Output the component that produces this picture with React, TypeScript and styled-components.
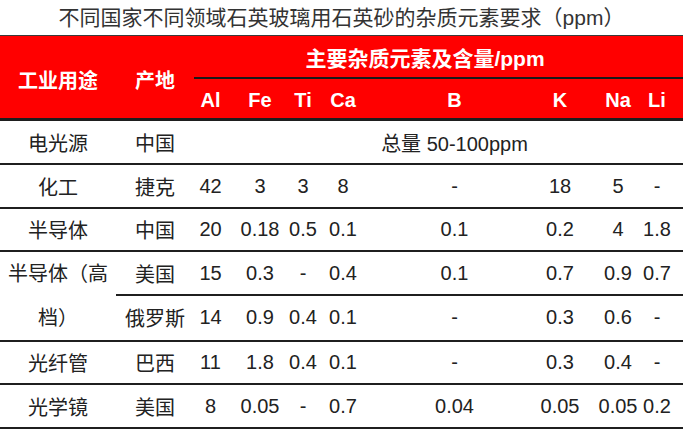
import React from "react";
import styled, { createGlobalStyle } from "styled-components";

const GlobalStyle = createGlobalStyle`
  html, body {
    margin: 0;
    padding: 0;
    background: #fff;
  }
  body {
    font-family: "Liberation Sans", "Noto Sans CJK SC", sans-serif;
  }
  * {
    box-sizing: border-box;
  }
`;

// widths of Al, Fe, Ti, Ca, B, K, Na, Li and the empty tail
const ELEMENT_COLS = "33px 66px 20px 60px 163px 48px 68px 10px 1fr";
const ELEMENTS = ["Al", "Fe", "Ti", "Ca", "B", "K", "Na", "Li"];

interface Sample {
    use: string;
    origin: string;
    values?: string[];
    total?: string;
    height: number;
}

const topRows: Sample[] = [
    { use: "电光源", origin: "中国", total: "总量 50-100ppm", height: 44 },
    { use: "化工", origin: "捷克", values: ["42", "3", "3", "8", "-", "18", "5", "-"], height: 44 },
    { use: "半导体", origin: "中国", values: ["20", "0.18", "0.5", "0.1", "0.1", "0.2", "4", "1.8"], height: 43 },
];

const highEnd = {
    use: "半导体（高档）",
    rows: [
        { origin: "美国", values: ["15", "0.3", "-", "0.4", "0.1", "0.7", "0.9", "0.7"] },
        { origin: "俄罗斯", values: ["14", "0.9", "0.4", "0.1", "-", "0.3", "0.6", "-"] },
    ],
};

const bottomRows: Sample[] = [
    { use: "光纤管", origin: "巴西", values: ["11", "1.8", "0.4", "0.1", "-", "0.3", "0.4", "-"], height: 43 },
    { use: "光学镜", origin: "美国", values: ["8", "0.05", "-", "0.7", "0.04", "0.05", "0.05", "0.2"], height: 44 },
];

const Page = styled.div`
    width: 683px;
    height: 433px;
    overflow: hidden;
    background: #fff;
`;

const Title = styled.h1`
    margin: 0;
    height: 35px;
    line-height: 35px;
    text-align: center;
    font-size: 21px;
    font-weight: normal;
    color: #333;
    white-space: nowrap;
`;

const Header = styled.div`
    display: grid;
    grid-template-columns: 116px 78px 1fr;
    height: 86px;
    background: #ff0000;
    border-top: 1px solid #3a3a3a;
    border-bottom: 3px solid #1e1e1e;
    color: #fff;
    font-weight: bold;
    font-size: 20px;
`;

const HeadLabel = styled.div`
    display: flex;
    align-items: center;
    justify-content: center;
    padding-top: 4px;
    white-space: nowrap;
`;

const ImpurityHead = styled.div`
    display: flex;
    flex-direction: column;
`;

const ImpurityTitle = styled.div`
    height: 43px;
    display: flex;
    align-items: center;
    justify-content: center;
    padding-right: 27px;
    border-bottom: 2px solid #1a1a1a;
    font-size: 21px;
    white-space: nowrap;
`;

const ElementRow = styled.div`
    flex: 1;
    display: grid;
    grid-template-columns: ${ELEMENT_COLS};
    padding-top: 3px;
`;

const Cell = styled.div`
    display: flex;
    align-items: center;
    justify-content: center;
    white-space: nowrap;
`;

const TotalCell = styled(Cell)`
    grid-column: 3 / -1;
    padding-left: 32px;
`;

const Row = styled.div<{ $h: number }>`
    display: grid;
    grid-template-columns: 116px 78px ${ELEMENT_COLS};
    height: ${p => p.$h}px;
    border-bottom: 2px solid #1f1f1f;
    font-size: 20px;
    color: #222;
`;

const Group = styled.div`
    display: grid;
    grid-template-columns: 116px 1fr;
    border-bottom: 2px solid #1f1f1f;
    font-size: 20px;
    color: #222;
`;

const UsageCell = styled.div`
    display: flex;
    align-items: center;
    justify-content: center;
    text-align: center;
    line-height: 44px;
    padding: 0 2px;
`;

const SubRow = styled.div<{ $line?: boolean }>`
    display: grid;
    grid-template-columns: 78px ${ELEMENT_COLS};
    height: ${p => (p.$line ? 44 : 42)}px;
    border-bottom: ${p => (p.$line ? "2px solid #1f1f1f" : "none")};
`;

const SampleRow: React.FC<{ sample: Sample }> = ({ sample }) => (
    <Row $h={sample.height}>
        <Cell>{sample.use}</Cell>
        <Cell>{sample.origin}</Cell>
        {sample.total ? (
            <TotalCell>{sample.total}</TotalCell>
        ) : (
            sample.values!.map((v, i) => <Cell key={i}>{v}</Cell>)
        )}
    </Row>
);

const App: React.FC = () => {
    return (
        <Page>
            <GlobalStyle />
            <Title>不同国家不同领域石英玻璃用石英砂的杂质元素要求（ppm）</Title>
            <Header>
                <HeadLabel>工业用途</HeadLabel>
                <HeadLabel>产地</HeadLabel>
                <ImpurityHead>
                    <ImpurityTitle>主要杂质元素及含量/ppm</ImpurityTitle>
                    <ElementRow>
                        {ELEMENTS.map(el => <Cell key={el}>{el}</Cell>)}
                    </ElementRow>
                </ImpurityHead>
            </Header>
            {topRows.map(s => <SampleRow key={s.use} sample={s} />)}
            <Group>
                <UsageCell>{highEnd.use}</UsageCell>
                <div>
                    {highEnd.rows.map((r, idx) => (
                        <SubRow key={r.origin} $line={idx === 0}>
                            <Cell>{r.origin}</Cell>
                            {r.values.map((v, i) => <Cell key={i}>{v}</Cell>)}
                        </SubRow>
                    ))}
                </div>
            </Group>
            {bottomRows.map(s => <SampleRow key={s.use} sample={s} />)}
        </Page>
    );
};

export default App;
